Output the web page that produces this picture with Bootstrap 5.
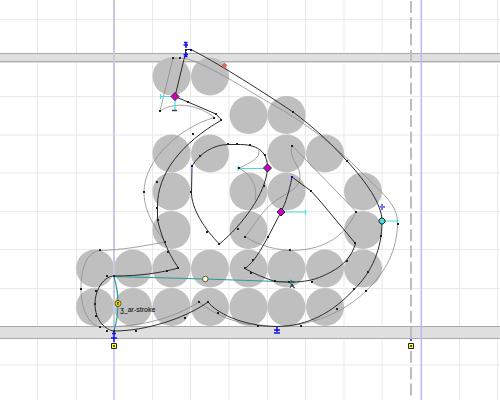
<!DOCTYPE html>
<html lang="en">
<head>
<meta charset="utf-8">
<meta name="viewport" content="width=device-width, initial-scale=1">
<title>Glyph editor</title>
<link href="https://cdn.jsdelivr.net/npm/bootstrap@5.3.0/dist/css/bootstrap.min.css" rel="stylesheet">
<style>
body { background: #fff; }
.glyph-view text { font: 7px "Liberation Sans", Arial, sans-serif; fill: #000; }
.outline { fill: none; stroke: #2b2b2b; stroke-width: 1; }
.layer { fill: none; stroke: #8c8c8c; stroke-width: .8; }
.cyan { fill: none; stroke: #45dede; stroke-width: 1.2; }
.teal { fill: none; stroke: #259c97; stroke-width: 1.2; }
</style>
</head>
<body>
<main class="overflow-hidden">
<svg class="glyph-view d-block w-100 h-auto" viewBox="0 0 500 400" role="img" aria-label="Glyph outline">
  <defs>
    <circle id="dot" r="19" fill="#bfbfbf"/>
    <rect id="node" x="-1" y="-1" width="2" height="2" fill="#222"/>
    <path id="diamond" d="M0-4 4 0 0 4-4 0Z" fill="#d000c8" stroke="#222" stroke-width="1"/>
  </defs>
  <!-- grid -->
  <path d="M37.5 0V400M76.500 0V400M152.500 0V400M190.500 0V400M229 0V400M267.500 0V400M305.500 0V400M344 0V400M382 0V400M459.500 0V400M497.500 0V400M0 19.500H500M0 96.500H500M0 135H500M0 173H500M0 211.500H500M0 249.500H500M0 288.500H500M0 365H500" stroke="#e9e9e9" fill="none"/>
  <!-- alignment zones -->
  <path d="M0 53H500V63H0ZM0 326H500V339H0Z" fill="#dfdfdf"/>
  <path d="M0 53.500H500M0 61.500H500M0 326.500H500M0 338.500H500" stroke="#aaa" fill="none"/>
  <g>
    <use href="#dot" x="171.500" y="76.500"/><use href="#dot" x="210" y="76.500"/>
    <use href="#dot" x="248.500" y="115"/><use href="#dot" x="286.500" y="115"/>
    <use href="#dot" x="171.500" y="153.500"/><use href="#dot" x="210" y="153.500"/><use href="#dot" x="286.500" y="153.500"/><use href="#dot" x="325" y="153.500"/>
    <use href="#dot" x="171.500" y="191.500"/><use href="#dot" x="248.500" y="191.500"/><use href="#dot" x="286.500" y="191.500"/><use href="#dot" x="363" y="191.500"/>
    <use href="#dot" x="171.500" y="230"/><use href="#dot" x="248.500" y="230"/><use href="#dot" x="363" y="230"/>
    <use href="#dot" x="95" y="268.500"/><use href="#dot" x="133" y="268.500"/><use href="#dot" x="171.500" y="268.500"/><use href="#dot" x="210" y="268.500"/><use href="#dot" x="248.500" y="268.500"/><use href="#dot" x="286.500" y="268.500"/><use href="#dot" x="325" y="268.500"/><use href="#dot" x="363" y="268.500"/>
    <use href="#dot" x="95" y="307"/><use href="#dot" x="133" y="307"/><use href="#dot" x="171.500" y="307"/><use href="#dot" x="210" y="307"/><use href="#dot" x="248.500" y="307"/><use href="#dot" x="286.500" y="307"/><use href="#dot" x="325" y="307"/>
  </g>
  <!-- side bearings -->
  <path d="M114 0V345" stroke="#cbcbd6" stroke-width="2"/>
  <path d="M114 13V345" stroke="#c4c4ff" stroke-width="2" stroke-dasharray="4 12.300"/>
  <path d="M114 348V400" stroke="#c4c4ff" stroke-width="1.500"/>
  <path d="M421.300 0V400" stroke="#b9b9f8" stroke-width="1.500"/>
  <path d="M411 1V342M411 351V400" stroke="#bdbdbd" stroke-width="2" stroke-dasharray="12 4.300"/>
  <!-- background layer -->
  <g class="layer">
    <path d="M160 111 173 58H180C198 58 237 84 270 103C309 125 331 143 356 167C382 193 398 204 397.500 224C397 250 386 272 366 291C342 314 310 326 277 326.500C238 327 214 314 199 302C175 317 145 327 100 327C87 324 81 306 81 289C81 267 87 252 100 250.500C122 250 144 246 165 242C150 221 144 207 144 192C144 160 180 127 214.500 117.500C200 106 177 100 160 111Z"/>
    <path d="M259 150C260 159 252 161 239 168.500C251 174 258 187 255 200"/>
    <path d="M292 145.500 356 211.500C344 240 319 250.500 290 250.500C269 249 254 243 245.500 236.500C260 217 264 207 283 196C293 190 300 186 300 176C300 165 288 158 292 145.500Z"/>
  </g>
  <!-- hints -->
  <path class="cyan" d="M160 96.500H175M160.500 94V99M175 97V110M238 168.500H267M238 166V171M281 212H305M305.500 210V215M382 221H397M397.500 219V224"/>
  <path d="M172 110.500H177" stroke="#354848" stroke-width="1.500"/>
  <path class="teal" d="M114 276.500 205 279 294 282M114 276.500Q122 304 114 331M290 280 294 282 290 284"/>
  <!-- active outline -->
  <g class="outline">
    <path d="M185.500 49.500H191C214 61 254 86 293 112C313 127 330 142 347 161C366 182 382 204 382 221C382 249 372 272 354 289.500C332 313 308 326 277 326.500C240 326 216 312 208 302C184 319 145 331 114 331C106 330 95 321 95 304C95 288 105 276 114 276C140 276 160 273 178.500 268C166 251 159 228 157.500 219V207C157 173 182 143 221.500 120L216 114 175 96.500 185.500 53Z"/>
    <path d="M192 166C200 153 214 144.500 228 144.500H237C257 144 267.500 151 267.500 168C266 194 242 225 219.500 244C205 230 191 208 191.500 192Z"/>
    <path d="M292 177C289 192 286 202 281 212L268 237C260 251 255 261 245 268.500C254 274 265 278 275 281.500C309 284 319 278 331 272C344 265 352 256 355.500 243.500L320 201 311 191Z"/>
  </g>
  <g>
    <use href="#node" x="173" y="58"/><use href="#node" x="180" y="58"/><use href="#node" x="186" y="50"/><use href="#node" x="160" y="111"/><use href="#node" x="188" y="102"/><use href="#node" x="216" y="114"/><use href="#node" x="221" y="120"/><use href="#node" x="214" y="118"/><use href="#node" x="193" y="134"/>
    <use href="#node" x="293" y="112"/><use href="#node" x="347" y="161"/><use href="#node" x="292" y="146"/><use href="#node" x="311" y="191"/><use href="#node" x="356" y="212"/><use href="#node" x="355" y="243"/><use href="#node" x="398" y="224"/><use href="#node" x="381" y="236"/>
    <use href="#node" x="144" y="192"/><use href="#node" x="157" y="182"/><use href="#node" x="157" y="208"/><use href="#node" x="158" y="220"/><use href="#node" x="200" y="156"/><use href="#node" x="228" y="144"/><use href="#node" x="237" y="144"/><use href="#node" x="250" y="145"/><use href="#node" x="265" y="155"/><use href="#node" x="239" y="168"/><use href="#node" x="264" y="186"/><use href="#node" x="191" y="192"/><use href="#node" x="207" y="232"/><use href="#node" x="238" y="229"/><use href="#node" x="219" y="244"/><use href="#node" x="245" y="237"/><use href="#node" x="268" y="237"/><use href="#node" x="290" y="250"/>
    <use href="#node" x="253" y="260"/><use href="#node" x="245" y="268"/><use href="#node" x="251" y="273"/><use href="#node" x="275" y="281"/><use href="#node" x="289" y="282"/><use href="#node" x="312" y="282"/><use href="#node" x="347" y="261"/><use href="#node" x="368" y="272"/><use href="#node" x="354" y="289"/><use href="#node" x="366" y="291"/><use href="#node" x="337" y="309"/><use href="#node" x="301" y="326"/><use href="#node" x="258" y="326"/><use href="#node" x="218" y="313"/><use href="#node" x="208" y="302"/><use href="#node" x="199" y="302"/><use href="#node" x="185" y="318"/>
    <use href="#node" x="165" y="242"/><use href="#node" x="168" y="252"/><use href="#node" x="178" y="268"/><use href="#node" x="167" y="271"/><use href="#node" x="100" y="250"/><use href="#node" x="107" y="276"/><use href="#node" x="114" y="276"/><use href="#node" x="96" y="291"/><use href="#node" x="81" y="289"/><use href="#node" x="95" y="304"/><use href="#node" x="96" y="316"/><use href="#node" x="107" y="331"/><use href="#node" x="100" y="327"/><use href="#node" x="136" y="331"/><use href="#node" x="114" y="331"/>
  </g>
  <use href="#diamond" x="175" y="96.500"/><use href="#diamond" x="267.500" y="168"/><use href="#diamond" x="281" y="212"/>
  <path d="M381 218H383L385 220V222L383 224H381L379 222V220Z" fill="#45dede" stroke="#222"/>
  <path d="M224.500 62.500 227.500 65.500 224.500 68.500 221.500 65.500Z" fill="#d76a64"/>
  <path d="M379 207H385M382 204V210" stroke="#777bea" stroke-width="2"/>
  <path d="M191 165H193V167H191ZM291 176H293V178H291ZM190 49H192V51H190Z" fill="#00d"/>
  <path d="M186 43V48M183.500 45H188M184 42.500H187.500M186 52V57M183.500 54.500H188M184 56.500H187.500M277 327V332M274 330H280M274 333H280M114 332V342M112 333.500H116M111 338H117M410 340H412" fill="none" stroke="#11e" stroke-width="1.500"/>
  <path d="M111.500 343.500H116.500V348.500H111.500ZM408.500 343.500H413.500V348.500H408.500Z" fill="#ff3" stroke="#222"/>
  <path d="M113 345H115V347H113ZM410 345H412V347H410Z" fill="#554"/>
  <circle cx="205.300" cy="279" r="2.800" fill="#fffbc5" stroke="#555"/>
  <path d="M290 288 292 284 293 287 295 288M291 286H294" fill="none" stroke="#333"/>
  <circle cx="118" cy="303.500" r="3" fill="#dfd51e" stroke="#665f00"/>
  <path d="M117.500 302V305M117.500 302.500H119M117.500 304H119" fill="none" stroke="#443f00" stroke-width=".7"/>
  <text x="120" y="312">ʒ_ar-stroke</text>
</svg>
</main>
<script src="https://cdn.jsdelivr.net/npm/bootstrap@5.3.0/dist/js/bootstrap.bundle.min.js"></script>
</body>
</html>
